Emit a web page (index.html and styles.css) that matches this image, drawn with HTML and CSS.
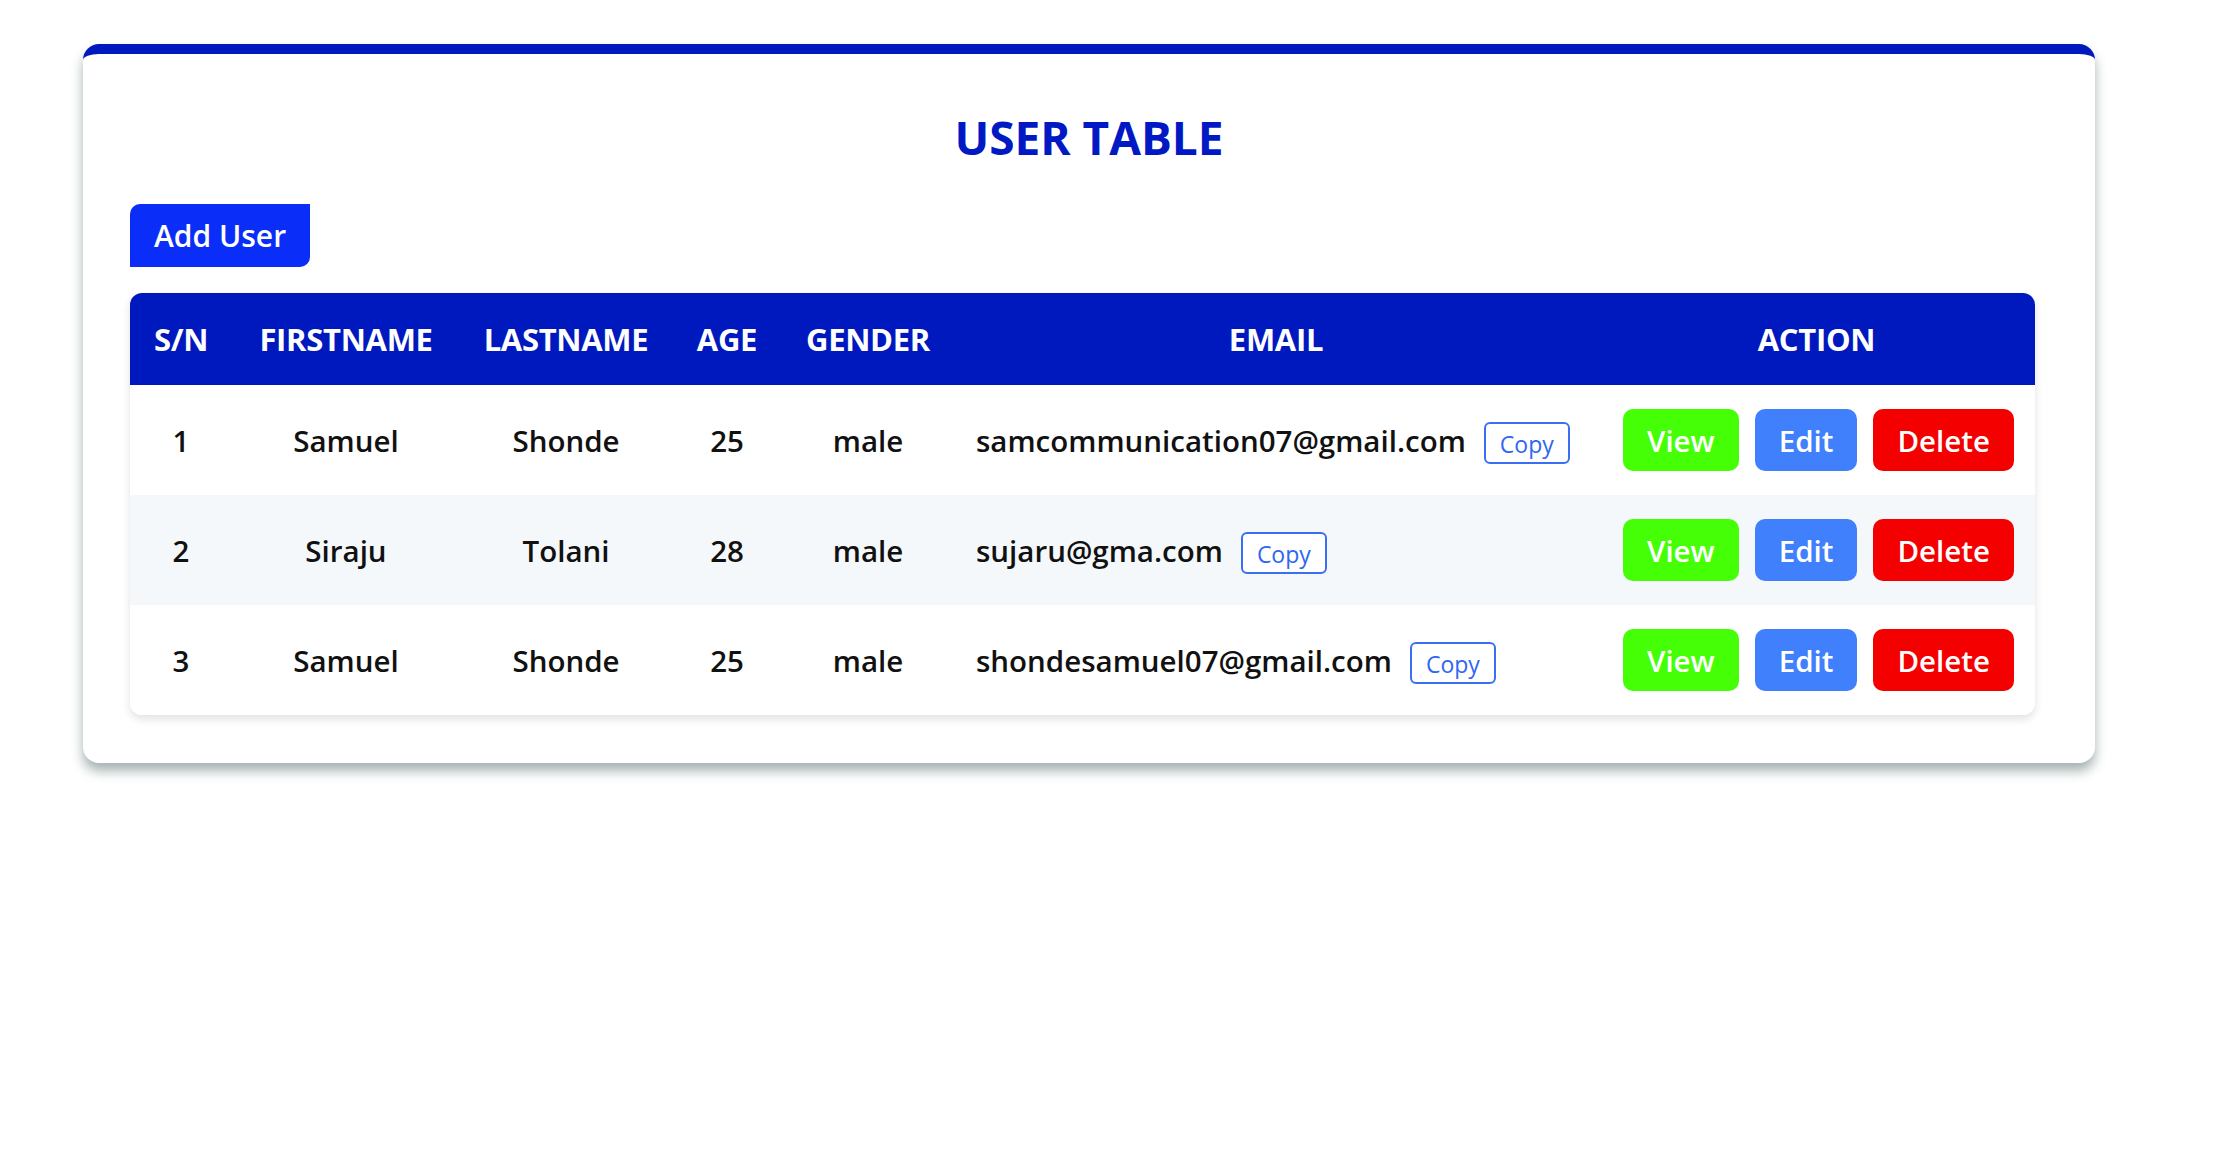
FILE: index.html
```html
<!DOCTYPE html>
<html lang="en">
<head>
<meta charset="utf-8">
<title>User Table</title>
<link rel="stylesheet" href="styles.css">
</head>
<body>
<div class="page">
<div class="card">
  <h1 class="title">USER TABLE</h1>
  <button class="add-btn">Add User</button>
  <table class="user-table">
    <colgroup>
      <col class="c-sn"><col class="c-first"><col class="c-last"><col class="c-age"><col class="c-gender"><col class="c-email"><col class="c-action">
    </colgroup>
    <thead>
      <tr><th>S/N</th><th>FIRSTNAME</th><th>LASTNAME</th><th>AGE</th><th>GENDER</th><th>EMAIL</th><th>ACTION</th></tr>
    </thead>
    <tbody>
      <tr>
        <td>1</td><td>Samuel</td><td>Shonde</td><td>25</td><td>male</td>
        <td class="email"><div class="email-wrap"><span>samcommunication07@gmail.com</span><button class="copy">Copy</button></div></td>
        <td class="action"><div class="actions"><button class="btn view">View</button><button class="btn edit">Edit</button><button class="btn del">Delete</button></div></td>
      </tr>
      <tr class="alt">
        <td>2</td><td>Siraju</td><td>Tolani</td><td>28</td><td>male</td>
        <td class="email"><div class="email-wrap"><span>sujaru@gma.com</span><button class="copy">Copy</button></div></td>
        <td class="action"><div class="actions"><button class="btn view">View</button><button class="btn edit">Edit</button><button class="btn del">Delete</button></div></td>
      </tr>
      <tr>
        <td>3</td><td>Samuel</td><td>Shonde</td><td>25</td><td>male</td>
        <td class="email"><div class="email-wrap"><span>shondesamuel07@gmail.com</span><button class="copy">Copy</button></div></td>
        <td class="action"><div class="actions"><button class="btn view">View</button><button class="btn edit">Edit</button><button class="btn del">Delete</button></div></td>
      </tr>
    </tbody>
  </table>
</div>
</div>
</body>
</html>
```
FILE: styles.css
```css
html, body {
  margin: 0;
  padding: 0;
  background: #ffffff;
  font-family: "Open Sans", "Noto Sans", sans-serif;
}

.page {
  min-height: 1152px;
  padding: 44px 0 0 83px;
  box-sizing: border-box;
}

.card {
  box-sizing: border-box;
  width: 2012px;
  padding: 54px 47px 48px 47px;
  background: #ffffff;
  border-top: 10px solid #0019be;
  border-radius: 16px;
  box-shadow: 0 8px 12px rgba(60, 85, 85, 0.45);
}

.title {
  margin: 0;
  text-align: center;
  color: #0019c4;
  font-size: 46px;
  font-weight: 700;
  line-height: 58px;
}

.add-btn {
  display: block;
  margin-top: 38px;
  height: 63px;
  padding: 0 24px;
  border: none;
  background: #0a2ef8;
  color: #ffffff;
  font-family: inherit;
  font-size: 30px;
  font-weight: 600;
  border-radius: 10px 0 10px 0;
}

.user-table {
  margin-top: 26px;
  width: 1905px;
  table-layout: fixed;
  border-collapse: separate;
  border-spacing: 0;
  border-radius: 12px;
  overflow: hidden;
  box-shadow: 0 4px 8px rgba(0, 0, 0, 0.12);
}

.c-sn { width: 102px; }
.c-first { width: 228px; }
.c-last { width: 212px; }
.c-age { width: 110px; }
.c-gender { width: 172px; }
.c-email { width: 644px; }
.c-action { width: 437px; }

.user-table th {
  background: #0019be;
  color: #ffffff;
  height: 92px;
  padding: 0;
  font-size: 31px;
  font-weight: 700;
  text-align: center;
  letter-spacing: -0.3px;
}

.user-table td {
  height: 110px;
  padding: 0;
  text-align: center;
  font-size: 29.5px;
  font-weight: 600;
  color: #111111;
  background: #ffffff;
}

.user-table tr.alt td {
  background: #f5f8fb;
}

.user-table td.email {
  text-align: left;
  padding-left: 22px;
  white-space: nowrap;
}

.email-wrap {
  display: flex;
  align-items: center;
  gap: 18px;
}

.copy {
  margin-top: 5px;
  height: 42px;
  padding: 2px 14px 0;
  border: 2px solid #3a6ff4;
  border-radius: 6px;
  background: #ffffff;
  color: #2f66f2;
  font-family: inherit;
  font-size: 23px;
  font-weight: 500;
}

.user-table td.action {
  text-align: left;
  padding-left: 25px;
}

.actions {
  display: flex;
  gap: 16px;
}

.btn {
  height: 62px;
  padding: 0 24px;
  border: none;
  border-radius: 10px;
  color: #ffffff;
  font-family: inherit;
  font-size: 29.5px;
  font-weight: 600;
}

.view { background: #44ff06; }
.edit { background: #4080fd; }
.del { background: #f50000; }
```
